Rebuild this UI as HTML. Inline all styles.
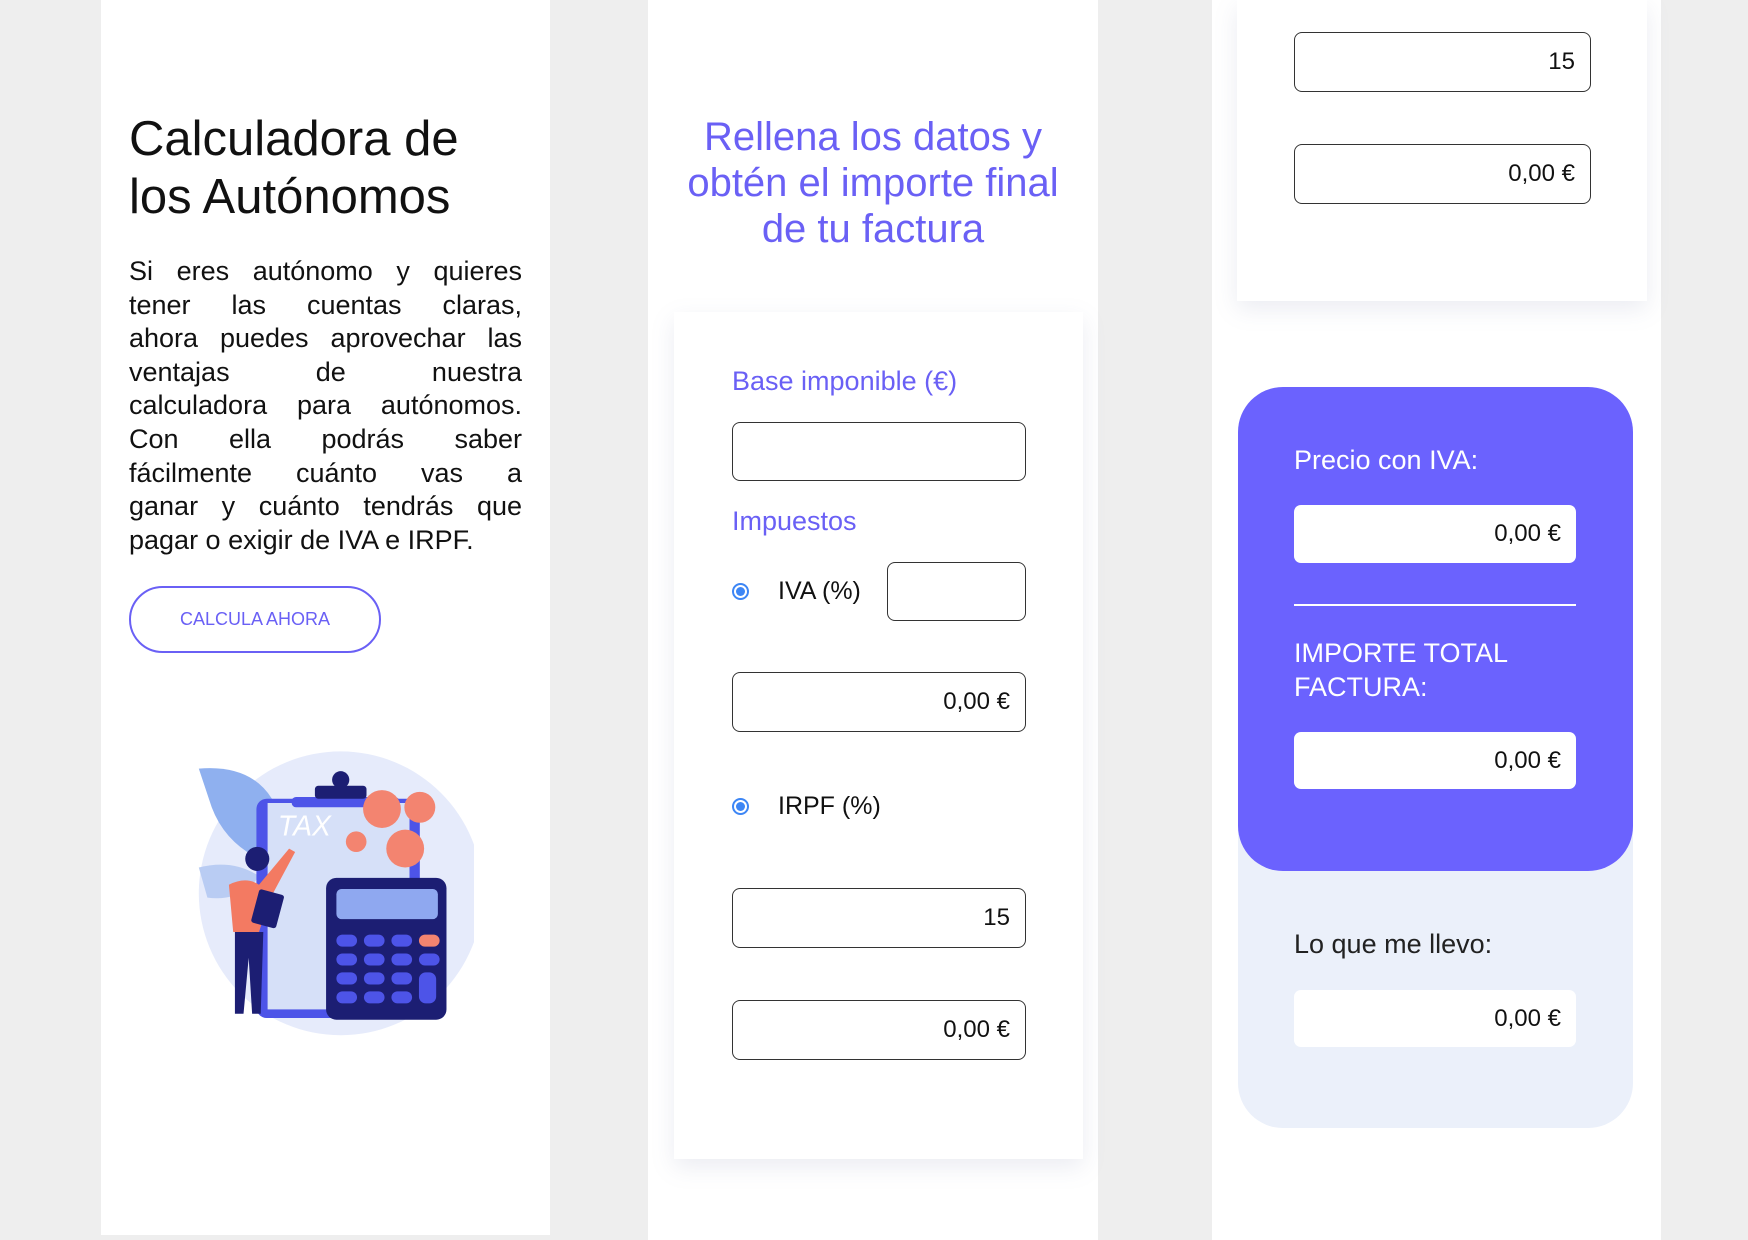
<!DOCTYPE html>
<html><head><meta charset="utf-8"><style>
*{margin:0;padding:0;box-sizing:border-box}
body{width:1748px;height:1240px;background:#eeeeee;position:relative;overflow:hidden;font-family:"Liberation Sans",Arial,sans-serif;color:#111}
.abs{position:absolute}
.col{position:absolute;top:0;background:#fff;height:1240px}
.inp{position:absolute;border:1.5px solid #333;border-radius:8px;background:#fff;font-size:24px;text-align:right;padding-right:15px;display:flex;align-items:center;justify-content:flex-end}
.w{position:absolute;background:#fff;border-radius:7px;font-size:24px;display:flex;align-items:center;justify-content:flex-end;padding-right:15px}
.purple{color:#6a60f5}
.radio{position:absolute;width:17px;height:17px;border-radius:50%;border:2px solid #3d86f5;background:#fff}
.radio:after{content:"";position:absolute;left:2px;top:2px;width:9px;height:9px;border-radius:50%;background:#3d86f5}
.jl{text-align:justify;text-align-last:justify;white-space:nowrap}
</style></head><body>
<div class="col" style="left:101px;width:449px;height:1235px"></div>
<div class="col" style="left:648px;width:450px"></div>
<div class="col" style="left:1212px;width:449px"></div>

<div class="abs" style="left:129px;top:110px;font-size:49px;line-height:58px;color:#111">Calculadora de<br>los Autónomos</div>
<div class="abs" style="left:129px;top:255px;width:393px;font-size:27px;line-height:33.6px">
<div class="jl">Si eres autónomo y quieres</div>
<div class="jl">tener las cuentas claras,</div>
<div class="jl">ahora puedes aprovechar las</div>
<div class="jl">ventajas de nuestra</div>
<div class="jl">calculadora para autónomos.</div>
<div class="jl">Con ella podrás saber</div>
<div class="jl">fácilmente cuánto vas a</div>
<div class="jl">ganar y cuánto tendrás que</div>
<div>pagar o exigir de IVA e IRPF.</div>
</div>
<div class="abs" style="left:129px;top:586px;width:252px;height:67px;border:2.5px solid #6a60f5;border-radius:34px;color:#6a60f5;font-size:18px;display:flex;align-items:center;justify-content:center">CALCULA AHORA</div>

<svg class="abs" style="left:173px;top:736px" width="301" height="306" viewBox="0 0 350 330">
<circle cx="195" cy="170" r="165" fill="#e6ebfb"/>
<path d="M30 25 Q90 20 115 60 Q120 110 100 130 Q60 110 45 70 Z" fill="#8fb0ef"/>
<path d="M30 140 Q70 130 100 150 Q80 180 40 175 Z" fill="#b9ccf3"/>
<rect x="97" y="60" width="190" height="255" rx="12" fill="#4d54e8"/>
<rect x="110" y="65" width="165" height="240" fill="#d6e0f8"/>
<rect x="138" y="58" width="125" height="12" rx="5" fill="#4d54e8"/>
<rect x="165" y="45" width="60" height="15" rx="4" fill="#1c1e73"/>
<circle cx="195" cy="38" r="10" fill="#1c1e73"/>
<text x="122" y="103" font-size="33" font-style="italic" fill="#fff" font-family="Liberation Sans">TAX</text>
<circle cx="243" cy="72" r="22" fill="#f38470"/><circle cx="287" cy="70" r="18" fill="#f38470"/>
<circle cx="270" cy="118" r="22" fill="#f38470"/><circle cx="213" cy="110" r="12" fill="#f38470"/>
<rect x="178" y="152" width="140" height="165" rx="12" fill="#1c1e73"/>
<rect x="190" y="165" width="118" height="35" rx="6" fill="#8fa8f0"/>
<g fill="#4d54e8"><rect x="190" y="218" width="24" height="14" rx="7"/><rect x="222" y="218" width="24" height="14" rx="7"/><rect x="254" y="218" width="24" height="14" rx="7"/>
<rect x="190" y="240" width="24" height="14" rx="7"/><rect x="222" y="240" width="24" height="14" rx="7"/><rect x="254" y="240" width="24" height="14" rx="7"/><rect x="286" y="240" width="24" height="14" rx="7"/>
<rect x="190" y="262" width="24" height="14" rx="7"/><rect x="222" y="262" width="24" height="14" rx="7"/><rect x="254" y="262" width="24" height="14" rx="7"/>
<rect x="190" y="284" width="24" height="14" rx="7"/><rect x="222" y="284" width="24" height="14" rx="7"/><rect x="254" y="284" width="24" height="14" rx="7"/><rect x="286" y="262" width="20" height="36" rx="8"/></g>
<rect x="286" y="218" width="24" height="14" rx="7" fill="#f38470"/>
<path d="M65 160 Q85 150 100 160 L135 118 L142 122 L112 178 L100 215 L70 215 Z" fill="#f37a62"/>
<circle cx="98" cy="130" r="14" fill="#1c1e73"/>
<path d="M72 215 L105 215 L102 310 L92 310 L88 245 L82 310 L72 310 Z" fill="#1c1e73"/>
<rect x="95" y="168" width="30" height="40" rx="3" fill="#1c1e73" transform="rotate(15 110 188)"/>
</svg>

<div class="abs purple" style="left:648px;width:450px;top:114px;text-align:center;font-size:40px;line-height:46px">Rellena los datos y<br>obtén el importe final<br>de tu factura</div>
<div class="abs" style="left:674px;top:312px;width:409px;height:847px;background:#fff;box-shadow:0 8px 22px rgba(120,130,170,0.15)"></div>
<div class="abs purple" style="left:732px;top:366px;font-size:27px">Base imponible (€)</div>
<div class="inp" style="left:732px;top:422px;width:294px;height:59px"></div>
<div class="abs purple" style="left:732px;top:506px;font-size:27px">Impuestos</div>
<div class="radio" style="left:732px;top:583px"></div>
<div class="abs" style="left:778px;top:577px;font-size:25px">IVA (%)</div>
<div class="inp" style="left:887px;top:562px;width:139px;height:59px"></div>
<div class="inp" style="left:732px;top:672px;width:294px;height:60px">0,00 €</div>
<div class="radio" style="left:732px;top:798px"></div>
<div class="abs" style="left:778px;top:792px;font-size:25px">IRPF (%)</div>
<div class="inp" style="left:732px;top:888px;width:294px;height:60px">15</div>
<div class="inp" style="left:732px;top:1000px;width:294px;height:60px">0,00 €</div>

<div class="abs" style="left:1237px;top:0;width:410px;height:301px;background:#fff;box-shadow:0 8px 22px rgba(120,130,170,0.15)"></div>
<div class="inp" style="left:1294px;top:32px;width:297px;height:60px">15</div>
<div class="inp" style="left:1294px;top:144px;width:297px;height:60px">0,00 €</div>

<div class="abs" style="left:1238px;top:387px;width:395px;height:741px;border-radius:45px;background:#ebf0fa"></div>
<div class="abs" style="left:1238px;top:387px;width:395px;height:484px;border-radius:45px;background:#6b62fe"></div>
<div class="abs" style="left:1294px;top:445px;font-size:27px;color:#fff">Precio con IVA:</div>
<div class="w" style="left:1294px;top:505px;width:282px;height:58px">0,00 €</div>
<div class="abs" style="left:1294px;top:604px;width:282px;height:2px;background:#fff"></div>
<div class="abs" style="left:1294px;top:636px;font-size:27px;line-height:34px;color:#fff">IMPORTE TOTAL<br>FACTURA:</div>
<div class="w" style="left:1294px;top:732px;width:282px;height:57px">0,00 €</div>
<div class="abs" style="left:1294px;top:929px;font-size:27px;color:#222">Lo que me llevo:</div>
<div class="w" style="left:1294px;top:990px;width:282px;height:57px">0,00 €</div>
</body></html>
